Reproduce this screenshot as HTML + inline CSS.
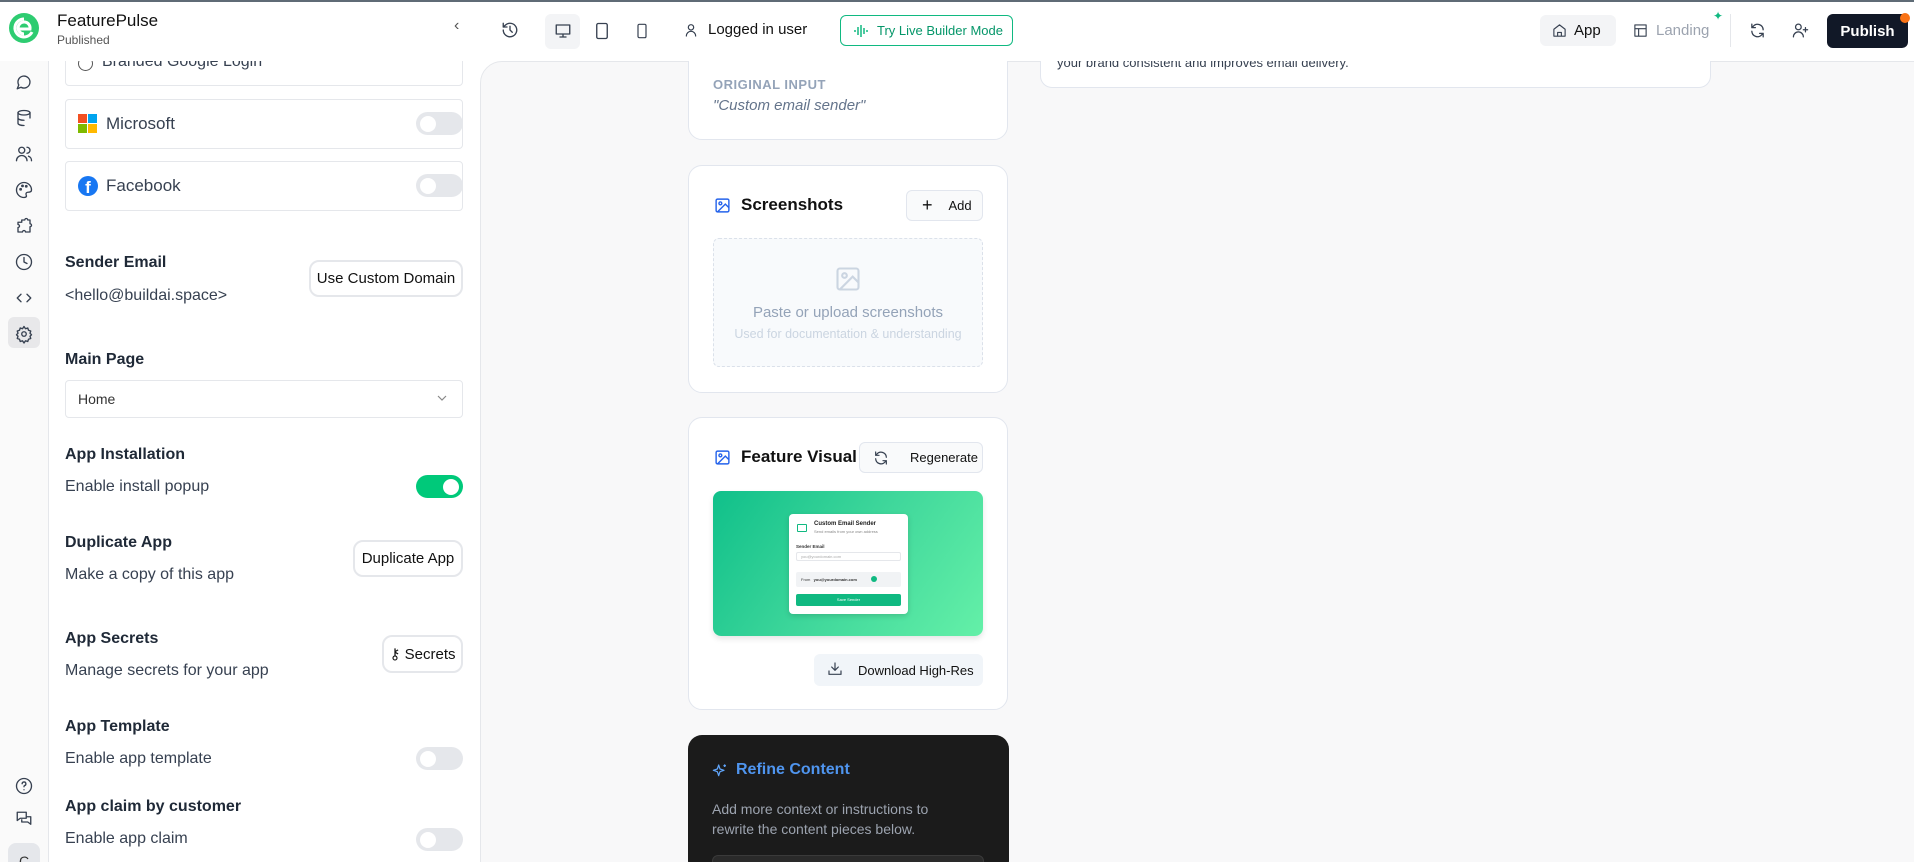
<!DOCTYPE html>
<html><head><meta charset="utf-8"><style>
*{box-sizing:border-box;margin:0;padding:0}
html,body{width:1914px;height:862px;overflow:hidden}
body{background:#fff;font-family:"Liberation Sans",sans-serif;color:#111827;position:relative}
.a{position:absolute}
.ic{fill:none;stroke:#374151;stroke-width:1.8;stroke-linecap:round;stroke-linejoin:round}
.lbl{position:absolute;left:65px;font-weight:bold;font-size:16px;color:#1f2937}
.sub{position:absolute;left:65px;font-size:16px;color:#374151}
.tog{position:absolute;left:416px;width:47px;height:23px;border-radius:12px;background:#e5e7eb}
.tog::after{content:"";position:absolute;left:4px;top:3.5px;width:16px;height:16px;border-radius:50%;background:#fff}
.tog.on{background:#00c97a}.tog.on::after{left:27px}
.btn{position:absolute;border:2px solid #e5e7eb;border-radius:10px;background:#fff;font-size:15px;color:#111;display:flex;align-items:center;justify-content:center}
.card{position:absolute;left:688px;width:320px;background:#fff;border:1px solid #e2e6ee;border-radius:14px}
.sbtn{position:absolute;border:1px solid #e2e6ee;border-radius:6px;background:#f9fafb;font-size:13px;color:#111;display:flex;align-items:center}
.top{z-index:5}
</style></head><body>
<!-- left rail -->
<div class="a" style="left:48px;top:61px;width:1px;height:801px;background:#e5e7eb"></div>
<div class="a" style="left:0;top:61px;width:48px;height:801px;background:#fafafa"></div>
<div class="a" style="left:8px;top:317px;width:32px;height:31px;border-radius:6px;background:#e8e8ea"></div>
<svg class="a" style="left:15px;top:73px" width="18" height="290" viewBox="0 0 18 290">
<g class="ic" stroke-width="1.4" transform="scale(.75)">
<path d="M3 21l2-5a8 8 0 1 1 3 3z"/>
<g transform="translate(0,48)"><ellipse cx="12" cy="5" rx="8" ry="3"/><path d="M4 5v14c0 2 4 3 8 3M20 5v7M4 12c0 2 4 3 8 3"/></g>
<g transform="translate(0,96)"><circle cx="9" cy="7" r="4"/><path d="M2 21a7 7 0 0 1 14 0M16 3a4 4 0 0 1 0 8M22 21a6 6 0 0 0-4-6"/></g>
<g transform="translate(0,144)"><path d="M12 22a10 10 0 1 1 10-10c0 3-3 3-5 3s-3 2-2 4-1 3-3 3z"/><circle cx="7.5" cy="11" r="1"/><circle cx="10" cy="6.5" r="1"/><circle cx="15" cy="7" r="1"/></g>
<g transform="translate(0,192)"><path d="M9 4h4a2 2 0 1 1 4 0h3v5a2 2 0 1 1 0 4v7h-6a2 2 0 1 0-4 0H4v-6a2 2 0 1 0 0-4V7h5z"/></g>
<g transform="translate(0,240)"><circle cx="12" cy="12" r="10"/><path d="M12 6v6l4 2"/></g>
<g transform="translate(0,288)"><path d="M8 7l-5 5 5 5M16 7l5 5-5 5"/></g>
<g transform="translate(0,336)"><circle cx="12" cy="12" r="3"/><path d="M12 2l2 3 3-1 1 3 3 1-1 3 2 2-2 2 1 3-3 1-1 3-3-1-2 3-2-3-3 1-1-3-3-1 1-3-2-2 2-2-1-3 3-1 1-3 3 1z"/></g>
</g></svg>
<svg class="a" style="left:15px;top:777px" width="18" height="18" viewBox="0 0 24 24"><circle class="ic" cx="12" cy="12" r="10"/><path class="ic" d="M9.5 9a2.5 2.5 0 1 1 3 2.5c-.5.2-.5 1-.5 1.5M12 17h.01"/></svg>
<svg class="a" style="left:15px;top:810px" width="18" height="18" viewBox="0 0 24 24"><path class="ic" d="M3 3h12v8H7l-4 3zM9 13v3h8l4 3V9h-6"/></svg>
<div class="a" style="left:8px;top:843px;width:32px;height:30px;border-radius:8px;background:#e5e7eb;font-size:14px;color:#333;text-align:center;padding-top:10px">C</div>
<!-- settings panel -->
<div class="a" style="left:65px;top:40px;width:398px;height:46px;border:1px solid #e5e7eb;border-radius:4px"></div>
<div class="a" style="left:78px;top:56px;width:15px;height:15px;border:1.3px solid #555;border-radius:50%"></div>
<div class="a" style="left:102px;top:53px;font-size:16px;color:#374151">Branded Google Login</div>
<div class="a" style="left:65px;top:99px;width:398px;height:50px;border:1px solid #e5e7eb;border-radius:4px"></div>
<div class="a" style="left:78px;top:114px;width:9px;height:9px;background:#f25022"></div><div class="a" style="left:88px;top:114px;width:9px;height:9px;background:#00a4ef"></div>
<div class="a" style="left:78px;top:124px;width:9px;height:9px;background:#7fba00"></div><div class="a" style="left:88px;top:124px;width:9px;height:9px;background:#ffb900"></div>
<div class="a" style="left:106px;top:114px;font-size:17px;color:#374151">Microsoft</div>
<div class="tog" style="top:112px"></div>
<div class="a" style="left:65px;top:161px;width:398px;height:50px;border:1px solid #e5e7eb;border-radius:4px"></div>
<div class="a" style="left:78px;top:176px;width:20px;height:20px;border-radius:50%;background:#1877f2;color:#fff;font-weight:bold;font-size:17px;text-align:center;line-height:24px;overflow:hidden">f</div>
<div class="a" style="left:106px;top:176px;font-size:17px;color:#374151">Facebook</div>
<div class="tog" style="top:174px"></div>
<div class="lbl" style="top:254px">Sender Email</div>
<div class="sub" style="top:287px">&lt;hello@buildai.space&gt;</div>
<div class="btn" style="left:309px;top:260px;width:154px;height:37px">Use Custom Domain</div>
<div class="lbl" style="top:351px">Main Page</div>
<div class="a" style="left:65px;top:380px;width:398px;height:38px;border:1px solid #e5e7eb;border-radius:4px;font-size:14px;color:#333;padding:10px 12px">Home</div>
<svg class="a" style="left:437px;top:395px" width="10" height="7" viewBox="0 0 10 7"><path d="M1 1l4 4 4-4" fill="none" stroke="#888" stroke-width="1.2"/></svg>
<div class="lbl" style="top:446px">App Installation</div>
<div class="sub" style="top:478px">Enable install popup</div>
<div class="tog on" style="top:475px"></div>
<div class="lbl" style="top:534px">Duplicate App</div>
<div class="sub" style="top:566px">Make a copy of this app</div>
<div class="btn" style="left:353px;top:540px;width:110px;height:37px">Duplicate App</div>
<div class="lbl" style="top:630px">App Secrets</div>
<div class="sub" style="top:662px">Manage secrets for your app</div>
<div class="btn" style="left:382px;top:635px;width:81px;height:38px">⚷ Secrets</div>
<div class="lbl" style="top:718px">App Template</div>
<div class="sub" style="top:750px">Enable app template</div>
<div class="tog" style="top:747px"></div>
<div class="lbl" style="top:798px">App claim by customer</div>
<div class="sub" style="top:830px">Enable app claim</div>
<div class="tog" style="top:828px"></div>
<!-- main -->
<div class="a" style="left:480px;top:61px;width:1460px;height:830px;background:#f8f8f9;border:1px solid #e5e7eb;border-radius:22px"></div>
<div class="a" style="left:1040px;top:30px;width:671px;height:58px;background:#fff;border:1px solid #e2e6ee;border-radius:12px"></div>
<div class="a" style="left:1057px;top:55px;font-size:13px;color:#374151">your brand consistent and improves email delivery.</div>
<div class="card" style="top:30px;height:110px"></div>
<div class="a" style="left:713px;top:77px;font-size:13px;letter-spacing:.5px;color:#94a3b8;font-weight:bold">ORIGINAL INPUT</div>
<div class="a" style="left:713px;top:97px;font-size:15px;font-style:italic;color:#64748b">"Custom email sender"</div>
<div class="card" style="top:165px;height:228px"></div>
<svg class="a" style="left:714px;top:197px" width="17" height="17" viewBox="0 0 24 24"><rect x="3" y="3" width="18" height="18" rx="2" fill="none" stroke="#2563eb" stroke-width="2"/><circle cx="9" cy="9" r="2" fill="none" stroke="#2563eb" stroke-width="2"/><path d="M21 15l-5-5L5 21" fill="none" stroke="#2563eb" stroke-width="2"/></svg>
<div class="a" style="left:741px;top:195px;font-size:17px;font-weight:bold;color:#111">Screenshots</div>
<div class="sbtn" style="left:906px;top:190px;width:77px;height:31px;padding-left:15px"><span style="font-size:18px;margin-right:16px">+</span>Add</div>
<div class="a" style="left:713px;top:238px;width:270px;height:129px;border:1px dashed #dbe1ea;border-radius:6px;background:#f8fafc"></div>
<svg class="a" style="left:834px;top:265px" width="28" height="28" viewBox="0 0 24 24"><rect x="3" y="3" width="18" height="18" rx="2" fill="none" stroke="#cbd5e1" stroke-width="1.8"/><circle cx="9" cy="9" r="2" fill="none" stroke="#cbd5e1" stroke-width="1.8"/><path d="M21 15l-5-5L5 21" fill="none" stroke="#cbd5e1" stroke-width="1.8"/></svg>
<div class="a" style="left:713px;top:304px;width:270px;text-align:center;font-size:15px;color:#94a3b8">Paste or upload screenshots</div>
<div class="a" style="left:713px;top:327px;width:270px;text-align:center;font-size:12.5px;color:#cbd5e1">Used for documentation &amp; understanding</div>
<div class="card" style="top:417px;height:293px"></div>
<svg class="a" style="left:714px;top:449px" width="17" height="17" viewBox="0 0 24 24"><rect x="3" y="3" width="18" height="18" rx="2" fill="none" stroke="#2563eb" stroke-width="2"/><circle cx="9" cy="9" r="2" fill="none" stroke="#2563eb" stroke-width="2"/><path d="M21 15l-5-5L5 21" fill="none" stroke="#2563eb" stroke-width="2"/></svg>
<div class="a" style="left:741px;top:447px;font-size:17px;font-weight:bold;color:#111">Feature Visual</div>
<div class="sbtn" style="left:859px;top:442px;width:124px;height:31px;padding-left:13px"><svg width="16" height="16" viewBox="0 0 24 24" style="margin-right:21px"><path class="ic" stroke="#111" d="M20 11A8 8 0 0 0 6 6L4 8M4 3v5h5M4 13a8 8 0 0 0 14 5l2-2M20 21v-5h-5"/></svg>Regenerate</div>
<div class="a" style="left:713px;top:491px;width:270px;height:145px;border-radius:8px;background:linear-gradient(125deg,#10c08a 0%,#3fd79b 50%,#64f0a8 100%);box-shadow:0 3px 6px rgba(0,0,0,.1)"></div>
<div class="a" style="left:789px;top:514px;width:119px;height:100px;background:#fff;border-radius:4px;box-shadow:0 2px 6px rgba(0,0,0,.15)"></div>
<div class="a" style="left:797px;top:524px;width:10px;height:8px;border:1.3px solid #10b981;border-radius:1px"></div>
<div class="a" style="left:814px;top:521px;font-size:6px;font-weight:bold;color:#222">Custom Email Sender</div>
<div class="a" style="left:814px;top:529px;font-size:4px;color:#888">Send emails from your own address</div>
<div class="a" style="left:796px;top:544px;font-size:4.5px;font-weight:bold;color:#333">Sender Email</div>
<div class="a" style="left:796px;top:552px;width:105px;height:9px;border:1px solid #e5e7eb;border-radius:2px;font-size:4px;color:#aaa;padding:1px 4px">you@yourdomain.com</div>
<div class="a" style="left:796px;top:572px;width:105px;height:15px;background:#f1f3f5;border-radius:2px;font-size:4px;color:#333;padding:5px 5px">From &nbsp; <b>you@yourdomain.com</b></div>
<div class="a" style="left:871px;top:576px;width:6px;height:6px;border-radius:50%;background:#10b981"></div>
<div class="a" style="left:796px;top:594px;width:105px;height:12px;background:#10b981;border-radius:2px;font-size:4px;color:#fff;text-align:center;line-height:12px">Save Sender</div>
<div class="a" style="left:814px;top:654px;width:169px;height:32px;background:#f1f5f9;border-radius:6px;font-size:13px;color:#111;padding:9px 0 0 44px">Download High-Res</div>
<svg class="a" style="left:827px;top:661px" width="16" height="16" viewBox="0 0 24 24"><path class="ic" stroke="#111" stroke-width="2.2" d="M12 3v11M7 9l5 5 5-5M3 15v5h18v-5"/></svg>
<div class="a" style="left:688px;top:735px;width:321px;height:140px;background:#1b1b1b;border-radius:14px"></div>
<svg class="a" style="left:712px;top:763px" width="16" height="16" viewBox="0 0 24 24"><path d="M10 3l2 6 6 2-6 2-2 6-2-6-6-2 6-2zM19 2v4M17 4h4" fill="none" stroke="#60a5fa" stroke-width="1.8" stroke-linejoin="round"/></svg>
<div class="a" style="left:736px;top:761px;font-size:16px;font-weight:bold;color:#4f95ef">Refine Content</div>
<div class="a" style="left:712px;top:799px;width:262px;font-size:14px;line-height:20px;color:#9ca3af">Add more context or instructions to rewrite the content pieces below.</div>
<div class="a" style="left:712px;top:855px;width:272px;height:20px;background:#2a2a2a;border:1px solid #3a3a3a;border-radius:6px"></div>
<!-- top bar -->
<div class="a top" style="left:0;top:0;width:1914px;height:61px;background:#fff"></div>
<div class="a top" style="left:0;top:0;width:1914px;height:2px;background:#5f6b76"></div>
<svg class="a top" style="left:8px;top:12px" width="32" height="32" viewBox="0 0 32 32"><circle cx="16" cy="16" r="15" fill="#2ecc71"/><path d="M16 7a9 9 0 1 0 8 13" fill="none" stroke="#fff" stroke-width="3"/><path d="M10 17h12a6 6 0 1 0-6 5" fill="none" stroke="#fff" stroke-width="3"/></svg>
<div class="a top" style="left:57px;top:11px;font-size:17px;color:#111">FeaturePulse</div>
<div class="a top" style="left:57px;top:33px;font-size:12px;color:#555">Published</div>
<div class="a top" style="left:454px;top:17px;font-size:16px;color:#555">‹</div>
<svg class="a top" style="left:501px;top:21px" width="18" height="18" viewBox="0 0 24 24"><path class="ic" stroke="#111" d="M3 12a9 9 0 1 0 3-6.7L3 8M3 3v5h5M12 7v5l3 3"/></svg>
<div class="a top" style="left:545px;top:14px;width:35px;height:35px;border-radius:6px;background:#f3f4f6"></div>
<svg class="a top" style="left:554px;top:22px" width="18" height="18" viewBox="0 0 24 24"><path class="ic" d="M3 4h18v12H3zM8 20h8M12 16v4"/></svg>
<svg class="a top" style="left:593px;top:21px" width="18" height="20" viewBox="0 0 24 24"><rect class="ic" stroke="#9ca3af" x="5" y="2" width="14" height="20" rx="2"/></svg>
<svg class="a top" style="left:634px;top:21px" width="16" height="20" viewBox="0 0 24 24"><rect class="ic" stroke="#9ca3af" x="6" y="2" width="12" height="20" rx="2"/></svg>
<svg class="a top" style="left:683px;top:21px" width="16" height="18" viewBox="0 0 24 24"><circle class="ic" stroke="#111" cx="12" cy="8" r="4"/><path class="ic" stroke="#111" d="M5 21a7 7 0 0 1 14 0"/></svg>
<div class="a top" style="left:708px;top:21px;font-size:15px;color:#111">Logged in user</div>
<div class="a top" style="left:840px;top:15px;width:173px;height:31px;border:1.5px solid #10b981;border-radius:6px;font-size:13px;color:#059669;display:flex;align-items:center;padding-left:36px">Try Live Builder Mode</div>
<svg class="a top" style="left:853px;top:23px" width="16" height="16" viewBox="0 0 16 16"><path d="M2 7v2M5 4v8M8 2v12M11 5v6M14 7v2" stroke="#10b981" stroke-width="1.5"/></svg>
<div class="a top" style="left:1540px;top:15px;width:76px;height:31px;border-radius:6px;background:#f3f4f6"></div>
<svg class="a top" style="left:1552px;top:23px" width="15" height="15" viewBox="0 0 24 24"><path class="ic" d="M3 10l9-7 9 7v11H3zM9 21v-6h6v6"/></svg>
<div class="a top" style="left:1574px;top:22px;font-size:15px;color:#111">App</div>
<svg class="a top" style="left:1633px;top:23px" width="15" height="15" viewBox="0 0 24 24"><path class="ic" stroke="#9ca3af" d="M3 3h18v18H3zM3 9h18M9 9v12"/></svg>
<div class="a top" style="left:1656px;top:22px;font-size:15px;color:#9ca3af">Landing</div>
<div class="a top" style="left:1713px;top:9px;font-size:12px;color:#10b981">✦</div>
<div class="a top" style="left:1730px;top:14px;width:1px;height:33px;background:#e5e7eb"></div>
<svg class="a top" style="left:1749px;top:22px" width="17" height="17" viewBox="0 0 24 24"><path class="ic" stroke="#111" d="M20 11A8 8 0 0 0 6 6L4 8M4 3v5h5M4 13a8 8 0 0 0 14 5l2-2M20 21v-5h-5"/></svg>
<svg class="a top" style="left:1792px;top:22px" width="17" height="17" viewBox="0 0 24 24"><circle class="ic" stroke="#111" cx="9" cy="7" r="4"/><path class="ic" stroke="#111" d="M2 21a7 7 0 0 1 14 0M19 8v6M16 11h6"/></svg>
<div class="a top" style="left:1827px;top:14px;width:81px;height:34px;border-radius:6px;background:#111827;color:#fff;font-size:15px;font-weight:bold;display:flex;align-items:center;justify-content:center">Publish</div>
<div class="a top" style="left:1900px;top:13px;width:10px;height:10px;border-radius:50%;background:#f97316"></div>
</body></html>
